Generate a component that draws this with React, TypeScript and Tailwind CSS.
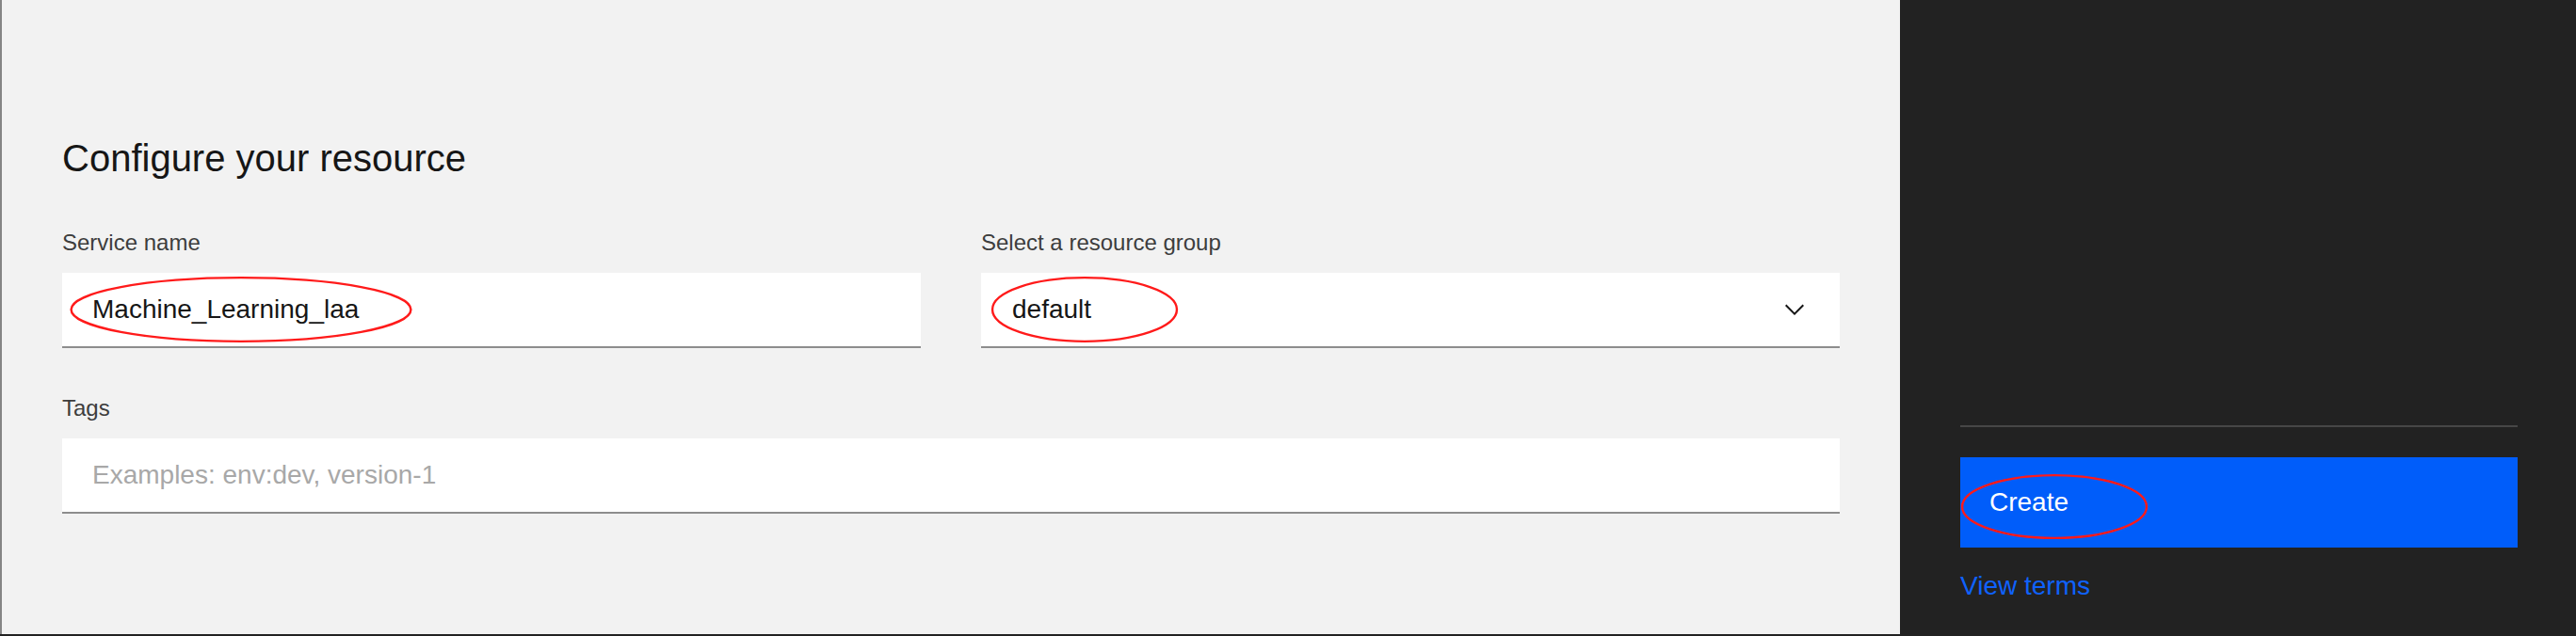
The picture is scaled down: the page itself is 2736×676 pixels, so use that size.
import React from "react";

function Mark({ className }: { className: string }) {
  // red hand-drawn style annotation ellipse
  return (
    <svg className={`pointer-events-none absolute ${className}`} viewBox="0 0 100 100" preserveAspectRatio="none">
      <ellipse cx="50" cy="50" rx="48.5" ry="47" fill="none" stroke="#ff1a1a" strokeWidth="2.4" vectorEffect="non-scaling-stroke" />
    </svg>
  );
}

function Chevron() {
  return (
    <svg viewBox="0 0 16 16" className="h-8 w-8 fill-[#161616]">
      <path d="M8 11L3 6 3.7 5.3 8 9.6 12.3 5.3 13 6z" />
    </svg>
  );
}

export default function App() {
  return (
    <div className="flex h-[676px] w-[2736px] bg-[#222222] font-['Liberation_Sans',Arial,sans-serif]">
      {/* Form */}
      <div className="h-[674px] w-[2018px] border-l-2 border-[#858585] bg-[#f2f2f2] px-16 pt-[144px]">
        <h2 className="text-[40px] leading-[48px] text-[#161616]">Configure your resource</h2>

        <div className="mt-[50px] grid grid-cols-2 gap-x-16">
          <div>
            <label className="block text-[24px] leading-[32px] text-[#3d3d3d]">Service name</label>
            <div className="relative mt-4">
              <input
                readOnly
                defaultValue="Machine_Learning_laa"
                className="block h-[80px] w-full border-b-2 border-[#8d8d8d] bg-white px-8 text-[28px] text-[#161616] outline-none"
              />
              <Mark className="left-[4px] top-[3px] h-[72px] w-[372px]" />
            </div>
          </div>

          <div>
            <label className="block text-[24px] leading-[32px] text-[#3d3d3d]">Select a resource group</label>
            <div className="relative mt-4 flex h-[80px] items-center justify-between border-b-2 border-[#8d8d8d] bg-white pl-[33px] pr-8">
              <span className="text-[28px] text-[#161616]">default</span>
              <Chevron />
              <Mark className="left-[9px] top-[3px] h-[72px] w-[202px]" />
            </div>
          </div>
        </div>

        <div className="mt-12">
          <label className="block text-[24px] leading-[32px] text-[#3d3d3d]">Tags</label>
          <input
            placeholder="Examples: env:dev, version-1"
            className="mt-4 block h-[80px] w-full border-b-2 border-[#8d8d8d] bg-white px-8 text-[28px] text-[#161616] outline-none placeholder:text-[#a8a8a8]"
          />
        </div>
      </div>

      {/* Summary side */}
      <div className="flex-1 pl-16 pr-[62px] pt-[452px]">
        <div className="h-[2px] bg-[#474747]" />
        <button className="relative mt-8 flex h-[96px] w-full items-center bg-[#005dfa] pl-[31px] text-[28px] leading-[36px] text-white">
          Create
          <Mark className="-left-[1px] top-[17px] h-[71px] w-[202px]" />
        </button>
        <a className="mt-[23px] block text-[28px] leading-[36px] text-[#0f62fe]">View terms</a>
      </div>
    </div>
  );
}
